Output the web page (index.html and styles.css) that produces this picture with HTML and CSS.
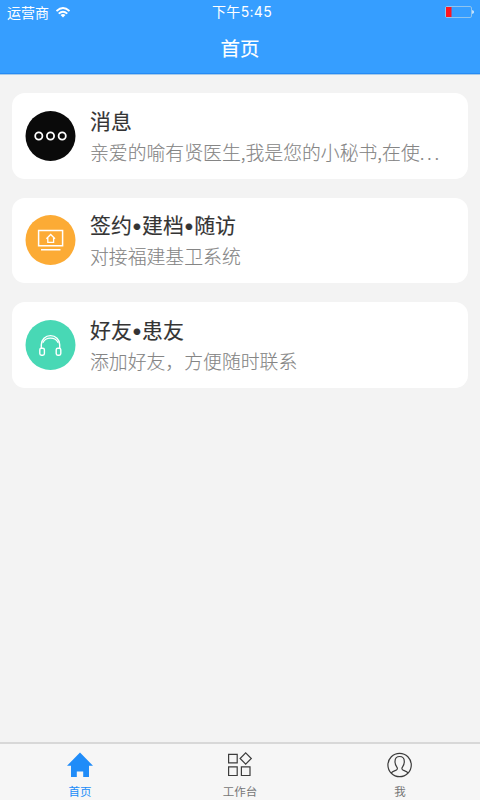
FILE: index.html
```html
<!DOCTYPE html>
<html lang="zh-CN">
<head>
<meta charset="utf-8">
<title>首页</title>
<link rel="stylesheet" href="styles.css">
</head>
<body>
<header class="header">
  <div class="status">
    <div class="carrier"><span>运营商</span>
      <svg class="wifi" width="14" height="11" viewBox="0 0 14 11" fill="none" stroke="#fff" stroke-width="1.9"><path d="M.5 4Q7-1.800 13.500 4M2.700 6.600Q7 2.800 11.300 6.600"/><path d="M4.500 8.100Q7 6 9.500 8.100L7 10.600Z" fill="#fff" stroke="none"/></svg>
    </div>
    <time class="time">下午5:45</time>
    <svg class="battery" width="29" height="12" viewBox="0 0 29 12"><rect x=".5" y=".5" width="26" height="11" rx="1.5" fill="none" stroke="#8fc4ee"/><path d="M1 1h5.500v10H1z" fill="#ff1520"/><path d="M27.300 4q1.500.4 1.500 2t-1.500 2z" fill="#fff"/></svg>
  </div>
  <h1 class="title">首页</h1>
</header>
<main class="list">
  <section class="card">
    <svg class="icon" viewBox="0 0 51 50"><circle cx="25.500" cy="25" r="25" fill="#0a0a0a"/><g fill="none" stroke="#fff" stroke-width="1.800"><circle cx="13.800" cy="25" r="3.600"/><circle cx="25.500" cy="25" r="3.600"/><circle cx="37.200" cy="25" r="3.600"/></g></svg>
    <div class="copy"><h2>消息</h2><p>亲爱的喻有贤医生,我是您的小秘书,在使<span class="dots">...</span></p></div>
  </section>
  <section class="card">
    <svg class="icon" viewBox="0 0 51 50"><circle cx="25.500" cy="25" r="25" fill="#fcab35"/><g fill="none" stroke="#fff" stroke-width="1.500"><path d="M13.600 15.400h24v15.400h-24zM16 34.800h19.500"/><path d="M21.400 23.800l4.300-4.300 4.300 4.300M22.800 23v4.300h5.800V23" stroke-width="1.300"/></g></svg>
    <div class="copy"><h2>签约<b class="dot">•</b>建档<b class="dot">•</b>随访</h2><p>对接福建基卫系统</p></div>
  </section>
  <section class="card">
    <svg class="icon" viewBox="0 0 51 50"><circle cx="25.500" cy="25" r="25" fill="#48d8b5"/><g fill="none" stroke="#fff" stroke-width="1.400"><path d="M16.300 28v-3.200a9.200 9.200 0 0 1 18.400 0V28"/><path d="M17.900 22.800a8.100 7.200 0 0 1 15.200 0" stroke-width="1.100"/><rect x="14.800" y="28.200" width="4.600" height="7" rx="1.600"/><rect x="31.200" y="28.200" width="4.600" height="7" rx="1.600"/></g></svg>
    <div class="copy"><h2>好友<b class="dot">•</b>患友</h2><p>添加好友，方便随时联系</p></div>
  </section>
</main>
<nav class="tabs">
  <a class="tab active"><svg width="26" height="26" viewBox="0 0 26 26"><path d="M13 .5L26 13.800h-4V25h-5.800v-5.500H9.800V25H4V13.800H0z" fill="#208cf8"/></svg><span>首页</span></a>
  <a class="tab"><svg width="26" height="26" viewBox="0 0 26 26" fill="none" stroke="#3c3c3c" stroke-width="1.200"><path d="M1.600 2.300h8.600v8.600H1.600zM1.600 14.900h8.600v8.600H1.600zM14.400 14.900H23v8.600h-8.600zM18.700.9l5.600 5.600-5.600 5.600-5.600-5.600z"/></svg><span>工作台</span></a>
  <a class="tab"><svg width="26" height="26" viewBox="0 0 26 26" fill="none" stroke="#3c3c3c" stroke-width="1.200"><circle cx="12.600" cy="13" r="11.700"/><path d="M4.200 21c.8-1.600 3-2.200 5-2.900 1.500-.6 1.500-1.800.5-3.200C8.400 13.200 8 11.600 8 9.400 8 6.200 9.900 4.500 12.600 4.500s4.700 1.700 4.700 4.900c0 2.200-.4 3.800-1.700 5.500-1 1.400-1 2.600.5 3.200 2 .7 4.200 1.300 5 2.900"/></svg><span>我</span></a>
</nav>
</body>
</html>
```
FILE: styles.css
```css
* { box-sizing: border-box; }
body {
  margin: 0;
  width: 480px;
  height: 800px;
  overflow: hidden;
  display: flex;
  flex-direction: column;
  background: #f3f3f3;
  font-family: "Noto Sans CJK SC", sans-serif;
}
h1, h2, p { margin: 0; }
.header {
  height: 75px;
  background: #369eff;
  border-bottom: 1px solid #a9cbe8;
  box-shadow: inset 0 -1px #258bf5;
  color: #fff;
}
.status {
  height: 24px;
  display: grid;
  grid-template-columns: 1fr auto 1fr;
  align-items: center;
  padding: 0 6px 0 7px;
  font-size: 14px;
  line-height: 22px;
}
.carrier { display: flex; align-items: center; gap: 7px; }
.time {
  padding-left: 3px;
  font-family: Inter, "Noto Sans CJK SC", sans-serif;
  letter-spacing: .3px;
}
.battery { justify-self: end; }
.title {
  text-align: center;
  font-size: 19.500px;
  font-weight: 400;
  -webkit-text-stroke: .15px currentColor;
  line-height: 48px;
}
.list {
  flex: 1;
  display: flex;
  flex-direction: column;
  gap: 19px;
  padding: 18px 12px;
}
.card {
  height: 85.500px;
  display: flex;
  align-items: center;
  gap: 14px;
  padding: 0 13px;
  border-radius: 13px;
  background: #fff;
}
.icon { width: 51px; height: 50px; flex: none; }
.copy { white-space: nowrap; }
h2 {
  font-size: 20.900px;
  line-height: 31px;
  font-weight: 400;
  -webkit-text-stroke: .15px currentColor;
  color: #343434;
}
.dot {
  display: inline-block;
  width: 10.300px;
  text-align: center;
  font-family: Inter, sans-serif;
  font-weight: 700;
  line-height: 1;
}
p {
  font-size: 18.850px;
  line-height: 31px;
  font-weight: 300;
  -webkit-text-stroke: .1px currentColor;
  color: #858585;
}
.dots { letter-spacing: 2.600px; }
.tabs {
  height: 58px;
  display: grid;
  grid-template-columns: repeat(3, 1fr);
  border-top: 2px solid #d8d8d8;
  background: #f6f6f6;
}
.tab {
  display: flex;
  flex-direction: column;
  align-items: center;
  padding-top: 8px;
  font-size: 11.500px;
  line-height: 18px;
  color: #777;
}
.tab span { margin-top: 4px; }
.active { color: #208cf8; }
```
